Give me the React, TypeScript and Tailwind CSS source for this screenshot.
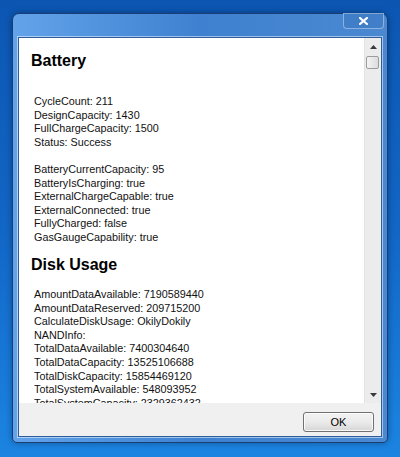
const battery1 = [
  "CycleCount: 211",
  "DesignCapacity: 1430",
  "FullChargeCapacity: 1500",
  "Status: Success",
];

const battery2 = [
  "BatteryCurrentCapacity: 95",
  "BatteryIsCharging: true",
  "ExternalChargeCapable: true",
  "ExternalConnected: true",
  "FullyCharged: false",
  "GasGaugeCapability: true",
];

const disk = [
  "AmountDataAvailable: 7190589440",
  "AmountDataReserved: 209715200",
  "CalculateDiskUsage: OkilyDokily",
  "NANDInfo:",
  "TotalDataAvailable: 7400304640",
  "TotalDataCapacity: 13525106688",
  "TotalDiskCapacity: 15854469120",
  "TotalSystemAvailable: 548093952",
  "TotalSystemCapacity: 2329362432",
  "TotalSystemUsed: 1781268480",
];

function Lines({ items }: { items: string[] }) {
  return (
    <div className="pl-[15px] text-[10.8px] leading-[13.6px] text-[#111]">
      {items.map((t) => (
        <div key={t} className="whitespace-nowrap">{t}</div>
      ))}
    </div>
  );
}

function Scrollbar() {
  return (
    <div className="w-[17px] shrink-0 flex flex-col bg-[#ececec] border-l border-[#e2e2e2]">
      <div className="h-[17px] flex items-center justify-center">
        <svg width="7" height="4" viewBox="0 0 7 4">
          <path d="M0 4 L3.5 0 L7 4 Z" fill="#3a3a3a" />
        </svg>
      </div>
      <div className="mt-[1px] ml-[1px] w-[13px] h-[13px] rounded-[2px] border border-[#9c9c9c] bg-gradient-to-r from-[#f4f4f4] to-[#dcdcdc]" />
      <div className="flex-1" />
      <div className="h-[17px] flex items-center justify-center">
        <svg width="7" height="4" viewBox="0 0 7 4">
          <path d="M0 0 L7 0 L3.5 4 Z" fill="#3a3a3a" />
        </svg>
      </div>
    </div>
  );
}

export default function App() {
  return (
    <div
      className="w-[400px] h-[457px] overflow-hidden pt-[13px] pl-[12px] bg-gradient-to-b from-[#0c56b2] via-[#1266c6] to-[#1c84e2]"
      style={{ fontFamily: '"Liberation Sans", Arial, sans-serif' }}
    >
      <div className="w-[376px] h-[430px] rounded-t-[7px] rounded-b-[5px] border border-[#183f78] bg-gradient-to-r from-[#62a3ea] via-[#3f81d0] to-[#4a88d0] flex flex-col shadow-[0_0_6px_rgba(0,0,0,0.35)]">
        <div className="h-[23px] flex justify-end pr-[3px] shrink-0">
          <div className="w-[41px] h-[16px] -mt-px rounded-b-[4px] border border-[#a9c7ec]/70 bg-[#3a76c0]/50 flex items-center justify-center">
            <svg width="9" height="8" viewBox="0 0 9 8">
              <path d="M1 1 L8 7 M8 1 L1 7" stroke="#ffffff" strokeWidth="2.2" strokeLinecap="square" />
            </svg>
          </div>
        </div>
        <div className="mx-[5px] mb-[5px] flex-1 border border-[#2d5d9a] flex flex-col bg-[#f0f0f0] shadow-[0_0_0_1px_rgba(255,255,255,0.5)]">
          <div className="h-[365px] flex bg-white">
            <div className="flex-1 overflow-hidden pt-[14px]">
              <div className="pl-[12px] text-[16px] leading-[18px] font-bold text-black">Battery</div>
              <div className="mt-[25px]">
                <Lines items={battery1} />
                <div className="mt-[13.6px]">
                  <Lines items={battery2} />
                </div>
              </div>
              <div className="mt-[11.5px] pl-[12px] text-[16px] leading-[18px] font-bold text-black">Disk Usage</div>
              <div className="mt-[14px]">
                <Lines items={disk} />
              </div>
            </div>
            <Scrollbar />
          </div>
          <div className="flex-1 flex justify-end items-start pt-[9px] pr-[7px]">
            <button className="w-[71px] h-[20px] rounded-[3px] border border-[#707070] bg-gradient-to-b from-[#f2f2f2] via-[#ebebeb] to-[#d6d6d6] text-[11px] text-black leading-none shadow-[inset_0_0_0_1px_rgba(255,255,255,0.8)]">
              OK
            </button>
          </div>
        </div>
      </div>
    </div>
  );
}
